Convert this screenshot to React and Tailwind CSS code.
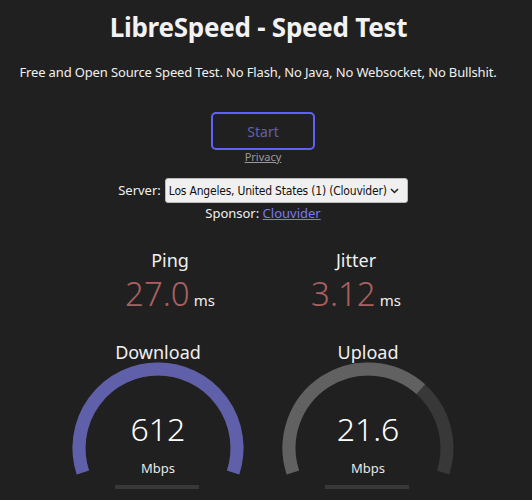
import React from "react";

function Gauge({ label, value, color, fraction }) {
  const cx = 105;
  const cy = 108;
  const r = 79;
  const a0 = -1.1 * Math.PI;
  const a1 = 0.1 * Math.PI;
  const pt = (a) => [cx + r * Math.cos(a), cy + r * Math.sin(a)];
  const [sx, sy] = pt(a0);
  const [ex, ey] = pt(a1);
  const bg = `M ${sx} ${sy} A ${r} ${r} 0 1 1 ${ex} ${ey}`;
  const af = a0 + fraction * 1.2 * Math.PI;
  const [fx, fy] = pt(af);
  const large = fraction * 216 > 180 ? 1 : 0;
  const fg = `M ${sx} ${sy} A ${r} ${r} 0 ${large} 1 ${fx} ${fy}`;
  return (
    <div className="relative w-[210px] h-[160px]">
      <svg width="210" height="160" className="absolute left-0 top-0">
        <path d={bg} stroke="#383838" strokeWidth="13" fill="none" />
        {fraction > 0 && <path d={fg} stroke={color} strokeWidth="13" fill="none" />}
        <rect x="62" y="145" width="84" height="4" fill="#383838" />
      </svg>
      <div className="relative text-center text-[18px] leading-[24px] text-[#f0f0f0]">{label}</div>
      <div className="relative mt-[47px] text-center text-[32px] leading-[36px] font-light text-white">{value}</div>
      <div className="relative mt-[12px] text-center text-[13px] leading-[18px] text-[#e8e8e8]">Mbps</div>
    </div>
  );
}

function Small({ label, value }) {
  return (
    <div className="w-[186px] text-center">
      <div className="text-[18px] leading-[24px] text-[#f0f0f0]">{label}</div>
      <div className="mt-[2px] h-[40px] leading-[40px] whitespace-nowrap">
        <span className="text-[33px] font-light text-[#aa6060]">{value}</span>
        <span className="ml-[4px] text-[15px] text-[#f0f0f0]">ms</span>
      </div>
    </div>
  );
}

export default function App() {
  return (
    <div
      className="w-[532px] h-[500px] overflow-hidden bg-[#202020] text-[#eeeeee] flex flex-col items-center"
      style={{ fontFamily: '"Noto Sans", "Open Sans", sans-serif' }}
    >
      <div className="w-full pr-[15px] mt-[9px] whitespace-nowrap text-center text-[26px] tracking-[-0.25px] leading-[36px] font-bold text-[#f2f2f2]">
        LibreSpeed - Speed Test
      </div>
      <div className="w-full pr-[16px] mt-[17px] whitespace-nowrap text-center text-[13px] tracking-[-0.14px] leading-[20px] text-[#f0f0f0]">
        Free and Open Source Speed Test. No Flash, No Java, No Websocket, No Bullshit.
      </div>
      <div className="w-full flex flex-col items-center pr-[6px]">
        <button className="mt-[30px] w-[104px] h-[38px] border-2 border-[#6060ff] rounded-[5px] text-[14px] text-[#6060aa] bg-transparent">
          Start
        </button>
        <a className="text-[11px] leading-[14px] text-[#9a9a9a] underline">Privacy</a>
        <div className="mt-[14px] flex items-center h-[25px] text-[13px]">
          <span className="mr-[4px] text-[#f0f0f0]">Server:</span>
          <div className="relative w-[243px] h-[25px] bg-[#f0f0f0] rounded-[3px] border border-[#bbbbbb] flex items-center pl-[3px] text-[12px] text-[#111]" style={{ fontFamily: '"DejaVu Sans Condensed", "Liberation Sans", sans-serif' }}>
            <span className="tracking-[-0.2px] whitespace-nowrap">Los Angeles, United States (1) (Clouvider)</span>
            <svg width="9" height="6" viewBox="0 0 9 6" className="absolute right-[8px] top-[9px]">
              <path d="M1 1 L4.5 4.5 L8 1" stroke="#222" strokeWidth="1.5" fill="none" />
            </svg>
          </div>
        </div>
        <div className="text-[13px] leading-[20px] text-[#f0f0f0]">
          Sponsor: <a className="text-[#7b7bf0] underline">Clouvider</a>
        </div>
        <div className="mt-[25px] flex">
          <Small label="Ping" value="27.0" />
          <Small label="Jitter" value="3.12" />
        </div>
        <div className="mt-[26px] flex">
          <Gauge label="Download" value="612" color="#6060aa" fraction={1} />
          <Gauge label="Upload" value="21.6" color="#616161" fraction={0.694} />
        </div>
      </div>
    </div>
  );
}
